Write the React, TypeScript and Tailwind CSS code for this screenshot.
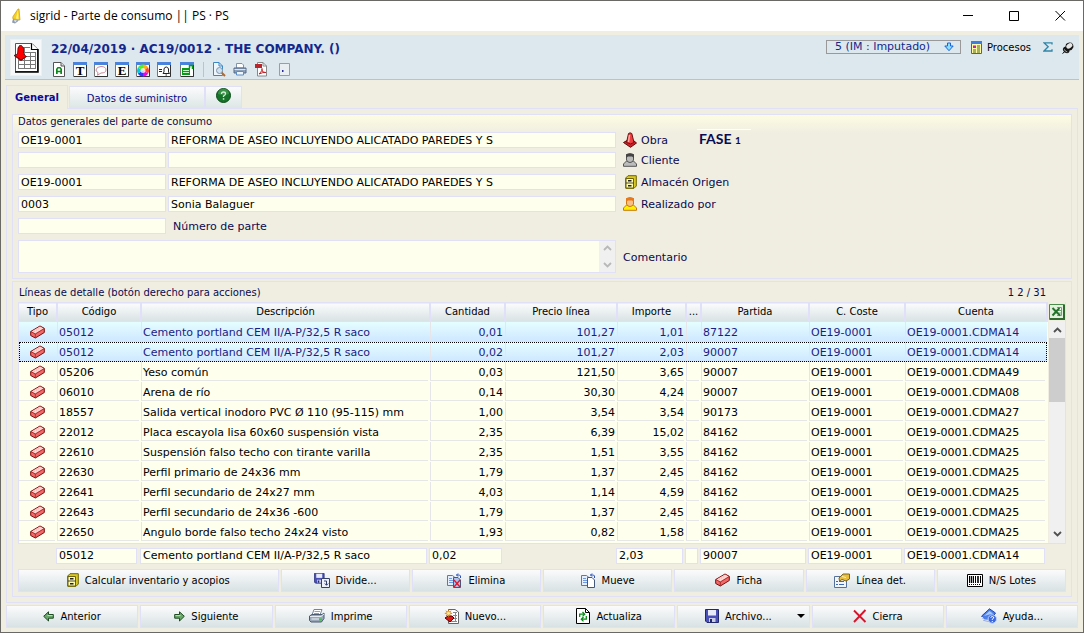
import React from "react";

type IconProps = { className?: string };

const Px = ({ w, h, className = "", children }: { w: number; h: number; className?: string; children: React.ReactNode }) => (
  <svg width={w} height={h} viewBox={`0 0 ${w} ${h}`} className={`shrink-0 ${className}`} aria-hidden="true">
    {children}
  </svg>
);

const AppIcon = () => (
  <Px w={14} h={16}>
    <path d="M8 1 L9 1 L10 12 L3 11 Q2 9 4 7 Z" fill="#f5d020" stroke="#c99a10" strokeWidth=".7" />
    <path d="M8 1.500 L8.500 11 L6 10.500 Z" fill="#fff08a" />
    <path d="M3 11 L9 12.500 L5 15.500 L2 14.500 Z" fill="#8d9bab" />
    <path d="M4 12 L7 12.500 L5 14.500 Z" fill="#e3e9f0" />
  </Px>
);

const SheetIcon = () => (
  <Px w={26} h={32}>
    <path d="M2.500 1.500 H19 L24.500 7 V29.500 H2.500 Z" fill="#fff" stroke="#555" />
    <path d="M25 7 V30 H2" fill="none" stroke="#000" strokeWidth="1.500" />
    <path d="M18.500 1.500 V7.500 H25" fill="#fff" stroke="#000" strokeWidth="1.200" />
    <path d="M5.500 5.500 H17 M5.500 10.500 H22.500 M5.500 14.500 H22.500 M5.500 18.500 H22.500 M5.500 22.500 H22.500 M5.500 26.500 H22.500 M5.500 5 V27 M11.500 5 V27 M17.500 10 V27 M22.500 10 V27" stroke="#777" fill="none" />
    <path d="M6.500 3.500 H8.500 L10.500 6 V11.500 L12 13.500 L13.500 14.500 L8 18.500 L1 13.500 L4.500 12 L5 6 Z" fill="#f00" stroke="#300" strokeWidth=".7" />
    <path d="M1.500 13.500 L8 18 L13 14.500" fill="none" stroke="#8b0000" />
  </Px>
);

const WindowFrame = () => (
  <>
    <path d="M.5 .5 H13.500 V14.500 H.5 Z" fill="#fff" stroke="#777" />
    <path d="M13.500 2 V14.500 H1" fill="none" stroke="#333" />
    <path d="M0 0 H14 V3 H0 Z" fill="#4a83dc" />
  </>
);

const LetterAIcon = () => (
  <Px w={14} h={15}>
    <path d="M1.500 .5 H9 L12.500 4 V14.500 H1.500 Z" fill="#fff" stroke="#555" />
    <path d="M9 .5 V4 H12.500" fill="#ddd" stroke="#555" />
    <path d="M4 12 V7 L5.500 5 H8.500 L10 7 V12 H8.300 V10.300 H5.700 V12 Z M5.700 7.200 V8.800 H8.300 V7.200 L7.800 6.600 H6.200 Z" fill="#0a8a1a" fillRule="evenodd" />
  </Px>
);
const LetterIcon = ({ letter }: { letter: string }) => (
  <Px w={14} h={15}>
    <WindowFrame />
    <text x="7" y="13" textAnchor="middle" fontSize="13" fontWeight="700" fontFamily="Liberation Serif, serif">{letter}</text>
  </Px>
);
const BubbleIcon = () => (
  <Px w={14} h={15}>
    <WindowFrame />
    <path d="M7 4.500 Q12 4.500 12 8 Q12 11 7 11 L3.500 13.200 L4 10.500 Q2 9.500 2 8 Q2.500 4.500 7 4.500" fill="#fff" stroke="#c98a9a" />
  </Px>
);
const ColorIcon = () => (
  <Px w={14} h={15}>
    <WindowFrame />
    <path d="M7 8.500 L7 2.500 A6 6 0 0 1 12.200 5.500 Z" fill="#ffb000" />
    <path d="M7 8.500 L12.200 5.500 A6 6 0 0 1 12.200 11.500 Z" fill="#f43" />
    <path d="M7 8.500 L12.200 11.500 A6 6 0 0 1 7 14.500 Z" fill="#e0e" />
    <path d="M7 8.500 L7 14.500 A6 6 0 0 1 1.800 11.500 Z" fill="#33f" />
    <path d="M7 8.500 L1.800 11.500 A6 6 0 0 1 1.800 5.500 Z" fill="#0cd" />
    <path d="M7 8.500 L1.800 5.500 A6 6 0 0 1 7 2.500 Z" fill="#5e2" />
    <circle cx="7" cy="8.500" r="2.500" fill="#fff" opacity=".75" />
  </Px>
);
const BellIcon = () => (
  <Px w={14} h={15}>
    <WindowFrame />
    <path d="M2 7.500 H5 M2 9.500 H5" stroke="#222" />
    <path d="M6 11.500 H12.500 L11.500 10 V7 Q11 5 9.300 5 Q7.500 5 7 7 V10 Z M8.500 13 H10" fill="#fff" stroke="#222" />
  </Px>
);
const GreenSheetIcon = () => (
  <Px w={15} h={15}>
    <WindowFrame />
    <path d="M2 6 H10 V13 H2 Z" fill="#0a9a1a" />
    <path d="M3 8.500 H9 M3 10.500 H9" stroke="#bff5c0" />
    <path d="M9.500 6 V3.500 H12.500 V7" fill="none" stroke="#0a9a1a" strokeWidth="1.500" />
  </Px>
);
const PreviewIcon = () => (
  <Px w={14} h={15}>
    <path d="M1.500 .5 H7 L10.500 4 V13.500 H1.500 Z" fill="#eef6fd" stroke="#3c86c4" />
    <path d="M7 .5 V4 H10.500" fill="none" stroke="#3c86c4" />
    <path d="M9.500 10.500 L13 14" stroke="#b06a2c" strokeWidth="2" />
    <circle cx="7.500" cy="8.500" r="3" fill="#cfe2f2" stroke="#8295aa" />
  </Px>
);
const SmallPrinterIcon = () => (
  <Px w={14} h={14}>
    <path d="M3.500 1.500 H9 L10.500 3 V6 H3.500 Z" fill="#fff" stroke="#8093ab" />
    <path d="M1 6 H13 V11 H1 Z" fill="#8ea1ba" stroke="#566a88" />
    <path d="M1.500 7.500 H12.500" stroke="#dbe5f2" />
    <path d="M3.500 9.500 H10.500 V13 H3.500 Z" fill="#eef5fc" stroke="#5c8cc0" />
  </Px>
);
const PdfIcon = () => (
  <Px w={14} h={15}>
    <path d="M3.500 .5 H9 L12.500 4 V14 H3.500 Z" fill="#fff" stroke="#888" />
    <path d="M9 .5 V4 H12.500" fill="none" stroke="#888" />
    <path d="M1 2 H8 V6 H1 Z" fill="#b8262c" />
    <path d="M5 12 Q9 8 8 6.500 Q7 7 9 10 L12 10.500 Q9 10 5 12" fill="none" stroke="#c02026" />
  </Px>
);
const DotIcon = () => (
  <Px w={12} h={13}>
    <path d="M.5 .5 H10.500 V12.500 H.5 Z" fill="#e8eef2" stroke="#8fa0ae" />
    <path d="M3 7 h1.500 v2 h-1.500 Z" fill="#2a2aa0" />
  </Px>
);
const BlueDownIcon = ({ className }: IconProps) => (
  <Px w={10} h={10} className={className}>
    <path d="M3.500 1 H6.500 V4 H9.200 L5 8.700 L.8 4 H3.500 Z" fill="#8ce0ff" stroke="#1a62d8" />
  </Px>
);
const ProcessIcon = () => (
  <Px w={11} h={13}>
    <path d="M.5 .5 H10.500 V12.500 H.5 Z" fill="#fff9a8" stroke="#2c66c8" />
    <path d="M0 0 H11 V3 H0 Z" fill="#3c7de0" />
    <path d="M2 4.500 H5 V7 H2 Z" fill="#c020c0" />
    <path d="M6 5 H9 M6 7 H9 M2 9 H5 M6 9 H9 M2 11 H5 M6 11 H9" stroke="#4a6a10" />
  </Px>
);
const SigmaIcon = () => (
  <Px w={10} h={10}>
    <path d="M9 2.500 V.8 H1 L5.200 4.800 L1 9 H9 V7.200" fill="none" stroke="#2f86a8" strokeWidth="1.300" />
  </Px>
);
const PinIcon = () => (
  <Px w={12} h={12}>
    <path d="M.5 11.500 L3.500 9" stroke="#000" />
    <path d="M4 2 Q6.500 -.3 9.500 .8 Q12 2.500 11.300 5.500 Q10 8.500 7.500 8.500 Q7.500 11.200 5 11.300 Q1 10.500 .8 7 Q1.500 4.500 3.500 4.500 Z" fill="#151515" />
    <ellipse cx="7.300" cy="3.800" rx="3.300" ry="2.300" fill="#e6e6e6" transform="rotate(-35 7.300 3.800)" />
    <path d="M2.300 7.300 Q3 9.500 5.300 10" fill="none" stroke="#aaa" />
  </Px>
);
const HelpBall = () => (
  <Px w={15} h={15}>
    <circle cx="7.500" cy="7.500" r="7" fill="#17722a" stroke="#0b4a18" />
    <path d="M2 6 A5.500 5.500 0 0 1 13 6 Q7.500 8 2 6" fill="#4fa65c" opacity=".6" />
    <path d="M5.500 6 Q5.500 4 7.500 4 Q9.500 4 9.500 5.700 Q9.500 7 7.500 8 V9" fill="none" stroke="#d6eed6" strokeWidth="1.300" />
    <path d="M6.800 10.200 h1.500 v1.500 h-1.500 Z" fill="#d6eed6" />
  </Px>
);
const ConeIcon = () => (
  <Px w={14} h={16}>
    <path d="M.5 10.500 L4 8.500 L10.500 8.500 L13.500 11 L7.500 15.300 Z" fill="#d02028" stroke="#5a0a0a" />
    <path d="M5.500 1.500 Q7 .2 8.800 1.500 L11 10.500 Q8 13.500 3.500 10.500 Z" fill="#ee3c40" stroke="#701010" />
    <path d="M6.500 3 L5.500 10" stroke="#ffb0a8" strokeWidth="1.500" />
  </Px>
);
const PersonIcon = ({ hair, face, body, line }: { hair: string; face: string; body: string; line: string }) => (
  <Px w={14} h={14}>
    <path d="M.5 13.300 V11 L3.500 8 H10.500 L13.500 11 V13.300 Z" fill={body} stroke={line} />
    <path d="M3.500 1.500 Q7 -.2 10.500 1.500 V7 Q9.500 9.500 7 9.500 Q4.500 9.500 3.500 7 Z" fill={face} stroke={line} />
    <path d="M3 5 V1.500 Q7 -.5 11 1.500 V5 L9 3.500 H5 Z" fill={hair} />
  </Px>
);
const CabinetIcon = () => (
  <Px w={12} h={14}>
    <path d="M.7 3 L3 .7 H11.300 V11 L9 13.300 H.7 Z" fill="#d8c828" stroke="#6f6400" />
    <path d="M1 3.500 H8.500 V13 H1 Z" fill="#fffbb0" stroke="#6f6400" />
    <path d="M1 8 H8.500" stroke="#222" strokeWidth=".8" />
    <path d="M3 5 H6.500 V6.500 H3 Z M3 10 H6.500 V11.500 H3 Z" fill="#222" />
  </Px>
);
const BrickIcon = () => (
  <Px w={15} h={14}>
    <path d="M.7 6.500 L10 1 L14.300 3.300 V7.500 L5.300 13 L.7 10.500 Z" fill="#f06a6a" stroke="#7a0c0c" />
    <path d="M1.500 6.500 L10 1.600 L13.500 3.500 L5.300 8.600 Z" fill="#ffd6d2" />
    <path d="M.9 6.600 L5.300 9 L14 3.700 M5.300 9 V12.800" fill="none" stroke="#a02020" strokeWidth=".8" />
    <path d="M4 6.500 L10.500 2.800" stroke="#f5a5a0" strokeDasharray="1 1.500" />
  </Px>
);
const ExcelIcon = () => (
  <Px w={16} h={16}>
    <path d="M.5 .5 H15.500 V15.500 H.5 Z" fill="#e3f0de" stroke="#4a8a4a" />
    <path d="M15 1 V15 H1" fill="none" stroke="#2f6a2f" strokeWidth="2" />
    <path d="M8 3.500 H12.500 V11.500 H8 M8 6.500 H12 M8 9 H12" fill="#fff" stroke="#6ea66e" />
    <path d="M3.500 4 L11 11.500 M10.500 4 L3.500 11.500" stroke="#23742a" strokeWidth="2" />
  </Px>
);
const ChevronIcon = ({ up, color }: { up?: boolean; color: string }) => (
  <Px w={9} h={6}>
    <path d={up ? "M1 5 L4.500 1.500 L8 5" : "M1 1 L4.500 4.500 L8 1"} fill="none" stroke={color} strokeWidth="1.800" />
  </Px>
);
const Floppy = () => (
  <>
    <path d="M.5 .5 H13.500 V13.500 H2 L.5 12 Z" fill="#4a50b8" stroke="#22286e" />
    <path d="M3 1 H11 V6.500 H3 Z" fill="#e8ecfa" />
    <path d="M4 9 H10.500 V13 H4 Z" fill="#c9cde6" />
    <path d="M5 10 H7 V13 H5 Z" fill="#22286e" />
  </>
);
const SaveIcon = () => <Px w={14} h={14}><Floppy /></Px>;
const DivideIcon = () => (
  <Px w={16} h={15}>
    <g transform="scale(.75)"><Floppy /></g>
    <path d="M7.500 5.500 H15.500 V14.500 H7.500 Z" fill="#eef1fa" stroke="#34406a" />
    <path d="M10 8 H12.500 V12 M10.800 10.500 L12.500 12.300 L14.200 10.500" fill="none" stroke="#34406a" />
  </Px>
);
const PagesIcon = ({ cross }: { cross?: boolean }) => (
  <Px w={15} h={15}>
    <path d="M.5 2.500 H5.500 L8.500 5 V12.500 H.5 Z" fill="#e6eefb" stroke="#5c78a8" />
    <path d="M2 5.500 H5 M2 7.500 H6 M2 9.500 H6" stroke="#6f9ae0" />
    <path d="M6.500 4.500 H11 L13.500 7 V14.500 H6.500 Z" fill={cross ? "#a9c4f2" : "#fff"} stroke="#44587c" />
    <path d="M9.500 2 H12.500 L13.500 3 V5 M11 .5 L9.500 2 L11 3.500" fill="none" stroke="#2850b8" />
    {cross && <path d="M7 7 L13 14 M13 7 L7 14" stroke="#e0182c" strokeWidth="1.300" />}
  </Px>
);
const PropertiesIcon = () => (
  <Px w={16} h={15}>
    <path d="M.5 3.500 H12.500 V14.500 H.5 Z" fill="#f2f6fc" stroke="#56709c" />
    <path d="M2 8.500 H4 M5 8.500 H10 M2 11.500 H4 M5 11.500 H10" stroke="#3c68b8" />
    <path d="M5 5 L9 1 H15.500 V6 L12 8 L8 6.500 L5.500 8 Z" fill="#e8bc3c" stroke="#7a6420" />
    <path d="M8 3.500 L12 4.500" stroke="#fff0a8" />
  </Px>
);
const BarcodeIcon = () => (
  <Px w={16} h={13}>
    <path d="M.5 .5 H15.500 V12.500 H.5 Z" fill="#fff" stroke="#000" />
    <path d="M2.500 2 V9 M6.500 2 V9 M8.500 2 V9 M13.500 2 V9" stroke="#000" />
    <path d="M4.500 2 V9 M11 2 V9" stroke="#000" strokeWidth="1.600" />
    <path d="M2 10.500 H14" stroke="#000" strokeDasharray="1 1" />
  </Px>
);
const ArrowIcon = ({ right }: { right?: boolean }) => (
  <Px w={11} h={11}>
    <path
      d={right ? "M10.300 5.300 L5.500 .8 V3.500 H.7 V7.200 H5.500 V10 Z" : "M.7 5.300 L5.500 .8 V3.500 H10.300 V7.200 H5.500 V10 Z"}
      fill="#6aa86a"
      stroke="#1f4a24"
    />
    <path d={right ? "M1.500 4.500 H6.500" : "M4.500 4.500 H9.500"} stroke="#b4e0ac" />
  </Px>
);
const PrinterIcon = () => (
  <Px w={16} h={14}>
    <path d="M5 .5 H13 L11 6 H3 Z" fill="#fff" stroke="#74839a" />
    <path d="M5.500 2.500 H11 M5 4.500 H10" stroke="#7fa4d8" />
    <path d="M.5 7 L3 5.500 H13 L15 4 V9.500 L12.500 13 H2 L.5 11.500 Z" fill="#9aa7b8" stroke="#4c5a70" />
    <path d="M1 7.500 H12 L15 5" fill="none" stroke="#e8edf4" />
    <path d="M2.500 10 H10" stroke="#f2f5f9" />
    <path d="M10 9.500 h3 v2 h-3 Z" fill="#2ad42a" />
  </Px>
);
const NewIcon = () => (
  <Px w={15} h={15}>
    <path d="M4.500 .5 H11 L14.500 3 V14.500 H4.500 Z" fill="#fff" stroke="#666" />
    <path d="M9 3.500 H13 M9 6.500 H13 M9 9.500 H13 M6 12.500 H13 M11.500 3 V13" stroke="#888" />
    <path d="M1 9 L4 7 H8 L10 9 L6 13 Z" fill="#e01818" stroke="#500" />
    <path d="M4.500 .5 V8 M.8 4.300 H8.200 M2 1.700 L7 7 M7 1.700 L2 7" stroke="#c06a10" strokeWidth=".9" />
    <circle cx="4.500" cy="4.300" r="2" fill="#ffe88a" stroke="#e09020" strokeWidth=".7" />
  </Px>
);
const RefreshIcon = () => (
  <Px w={14} h={16}>
    <path d="M.5 .5 H9.500 L13.500 4.500 V15.500 H.5 Z" fill="#fff" stroke="#000" />
    <path d="M9.500 .5 V4.500 H13.500" fill="none" stroke="#000" />
    <path d="M3.700 9 V6.200 H7.500 M6.500 4 L8.700 6.200 L6.500 8.400" fill="none" stroke="#0a8a1a" strokeWidth="1.300" />
    <path d="M10.300 8 V11.200 H6.500 M7.500 9 L5.300 11.200 L7.500 13.400" fill="none" stroke="#0a8a1a" strokeWidth="1.300" />
  </Px>
);
const CrossIcon = () => (
  <Px w={14} h={14}>
    <path d="M1 1.500 L12.500 13 M12.500 1 L1 13" stroke="#d8142c" strokeWidth="1.900" />
  </Px>
);
const HelpBookIcon = () => (
  <Px w={16} h={16}>
    <path d="M.7 8 L8.500 .8 L14.500 5 L9 13 L3 12.500 Z" fill="#4c80e8" stroke="#2448b0" />
    <path d="M3 8 L8.500 3 L12 5.500 Z" fill="#a8c8ff" />
    <path d="M1 9 L3 12 L9 12.500" fill="none" stroke="#fff" />
    <circle cx="11.300" cy="11" r="4.200" fill="#3c68dc" stroke="#bcd0ff" />
    <path d="M9.800 9.800 Q10 8.500 11.400 8.500 Q13 8.700 12.700 10 Q12.300 10.700 11.300 11.200 V12 M11.300 13 V14" fill="none" stroke="#fff" />
  </Px>
);

const fieldCls = "min-w-0 border border-[#e0e0f8] bg-[#ffffee] px-[2px] text-[11px] leading-[14px] text-black outline-none";
const btnCls =
  "flex h-[23px] items-center justify-center gap-[6px] border border-[#e0e0f8] bg-linear-to-b from-[#fbfbfc] to-[#d8e2e4] text-[10px] text-black";

const Field = ({ label, value = "", className = "" }: { label: string; value?: string; className?: string }) => (
  <input aria-label={label} defaultValue={value} className={`h-[16px] ${fieldCls} ${className}`} />
);

const ToolButton = ({ label, children }: { label: string; children: React.ReactNode }) => (
  <button type="button" aria-label={label} className="flex h-[16px] items-center">
    {children}
  </button>
);

const IconLabel = ({ icon, text, className = "" }: { icon: React.ReactNode; text: string; className?: string }) => (
  <div className={`ml-[5px] flex h-[16px] items-center gap-[4px] leading-[16px] ${className}`}>
    {icon}
    <span className="pt-[2px]">{text}</span>
  </div>
);

const ActionButton = ({ icon, text, className = "" }: { icon: React.ReactNode; text: string; className?: string }) => (
  <button type="button" className={`${btnCls} ${className}`}>
    {icon}
    <span>{text}</span>
  </button>
);

type Row = [string, string, string, string, string, string, string];
const rows: Row[] = [
  ["05012", "Cemento portland CEM II/A-P/32,5 R saco", "0,01", "101,27", "1,01", "87122", "14"],
  ["05012", "Cemento portland CEM II/A-P/32,5 R saco", "0,02", "101,27", "2,03", "90007", "14"],
  ["05206", "Yeso común", "0,03", "121,50", "3,65", "90007", "49"],
  ["06010", "Arena de río", "0,14", "30,30", "4,24", "90007", "08"],
  ["18557", "Salida vertical inodoro PVC Ø 110 (95-115) mm", "1,00", "3,54", "3,54", "90173", "27"],
  ["22012", "Placa escayola lisa 60x60 suspensión vista", "2,35", "6,39", "15,02", "84162", "25"],
  ["22610", "Suspensión falso techo con tirante varilla", "2,35", "1,51", "3,55", "84162", "25"],
  ["22630", "Perfil primario de 24x36 mm", "1,79", "1,37", "2,45", "84162", "25"],
  ["22641", "Perfil secundario de 24x27 mm", "4,03", "1,14", "4,59", "84162", "25"],
  ["22643", "Perfil secundario de 24x36 -600", "1,79", "1,37", "2,45", "84162", "25"],
  ["22650", "Angulo borde falso techo 24x24 visto", "1,93", "0,82", "1,58", "84162", "25"],
];

const columns = [
  { name: "Tipo", width: "w-[38px]" },
  { name: "Código", width: "w-[84px]" },
  { name: "Descripción", width: "w-auto" },
  { name: "Cantidad", width: "w-[75px]" },
  { name: "Precio línea", width: "w-[112px]" },
  { name: "Importe", width: "w-[69px]" },
  { name: "...", width: "w-[15px]" },
  { name: "Partida", width: "w-[108px]" },
  { name: "C. Coste", width: "w-[96px]" },
  { name: "Cuenta", width: "w-[142px]" },
];

const DetailTable = () => (
  <table className="w-full table-fixed border-collapse text-[11px]">
    <colgroup>
      {columns.map((c) => (
        <col key={c.name} className={c.width} />
      ))}
    </colgroup>
    <thead>
      <tr>
        {columns.map((c) => (
          <th
            key={c.name}
            className="h-[19px] overflow-hidden border-y border-r-2 border-[#e0e0f8] bg-linear-to-b from-[#fbfbfc] to-[#d8e2e4] p-0 text-center text-[10px] leading-[16px] font-normal whitespace-nowrap text-black"
          >
            {c.name}
          </th>
        ))}
      </tr>
    </thead>
    <tbody>
      {rows.map((r, i) => {
        const selected = i < 2;
        const cells: React.ReactNode[] = [
          <BrickIcon key="icon" />, r[0], r[1], r[2], r[3], r[4], "", r[5], "OE19-0001", `OE19-0001.CDMA${r[6]}`,
        ];
        return (
          <tr
            key={i}
            aria-selected={selected}
            className={
              selected
                ? `bg-linear-to-b from-[#e4feff] to-[#cfe6ff] text-[#1c1c84] ${i === 1 ? "outline-1 -outline-offset-1 outline-black outline-dotted" : ""}`
                : "bg-[#ffffee] text-black"
            }
          >
            {cells.map((c, k) => (
              <td key={k} className="h-[20px] p-0">
                <div
                  className={`mr-[2px] flex h-[19px] items-center overflow-hidden border-b leading-[16px] whitespace-nowrap ${
                    selected ? "border-b-transparent" : "border-b-[#e6e6e6]"
                  } ${k === 0 ? "justify-center pt-[2px]" : "border-l border-l-[#e6e6ea] pt-[4px] pl-[1px]"} ${k >= 3 && k <= 5 ? "justify-end" : ""}`}
                >
                  {c}
                </div>
              </td>
            ))}
          </tr>
        );
      })}
    </tbody>
  </table>
);

const Scrollbar = () => (
  <div className="flex w-[16px] grow flex-col items-center bg-[#f0f0f0] pt-[6px] pb-[6px]">
    <ChevronIcon up color="#505050" />
    <div className="mt-[5px] h-[64px] w-full bg-[#cdcdcd]" />
    <div className="mt-auto">
      <ChevronIcon color="#505050" />
    </div>
  </div>
);

export default function App() {
  return (
    <div className="flex min-h-screen flex-col border border-[#6b6966] bg-[#f0eee1] font-['DejaVu_Sans',Verdana,sans-serif] text-[11px] text-[#0a0a50]">
      <header className="flex h-[30px] items-center bg-white pl-[9px] text-black">
        <AppIcon />
        <h1 className="ml-[6px] font-['Open_Sans','Noto_Sans',sans-serif] text-[12px] leading-[16px]">
          sigrid - Parte de consumo || PS · PS
        </h1>
        <div className="ml-auto flex">
          <button type="button" aria-label="Minimizar" className="flex h-[30px] w-[46px] items-center justify-center">
            <Px w={11} h={11}><path d="M0 4.500 H10" stroke="#000" /></Px>
          </button>
          <button type="button" aria-label="Maximizar" className="flex h-[30px] w-[46px] items-center justify-center">
            <Px w={11} h={11}><path d="M.5 .5 H9.500 V9.500 H.5 Z" fill="none" stroke="#000" /></Px>
          </button>
          <button type="button" aria-label="Cerrar" className="flex h-[30px] w-[46px] items-center justify-center">
            <Px w={11} h={11}><path d="M.5 0 L10 9.500 M10 0 L.5 9.500" stroke="#000" /></Px>
          </button>
        </div>
      </header>

      <section className="mx-[4px] mt-[4px] flex h-[45px] items-start border-b border-[#b4c2e0] bg-[#dde7ee]">
        <div className="mt-[4px] ml-[5px] flex h-[37px] w-[32px] items-center justify-center border border-[#eef0f0] bg-[#f6f8fa]">
          <SheetIcon />
        </div>
        <div className="ml-[9px]">
          <h2 className="mt-[6px] text-[12px] leading-[16px] font-bold text-[#14288c]">22/04/2019 · AC19/0012 · THE COMPANY. ()</h2>
          <div className="mt-[4px] ml-px flex items-center gap-[7px]">
            <ToolButton label="Texto A"><LetterAIcon /></ToolButton>
            <ToolButton label="Texto T"><LetterIcon letter="T" /></ToolButton>
            <ToolButton label="Comentario"><BubbleIcon /></ToolButton>
            <ToolButton label="Texto E"><LetterIcon letter="E" /></ToolButton>
            <ToolButton label="Color"><ColorIcon /></ToolButton>
            <ToolButton label="Avisos"><BellIcon /></ToolButton>
            <div className="ml-[2px] flex"><ToolButton label="Hoja"><GreenSheetIcon /></ToolButton></div>
            <div className="mr-[1px] ml-[1px] h-[15px] w-px bg-[#b4c4d4]" />
            <ToolButton label="Vista previa"><PreviewIcon /></ToolButton>
            <ToolButton label="Imprimir"><SmallPrinterIcon /></ToolButton>
            <ToolButton label="PDF"><PdfIcon /></ToolButton>
            <div className="ml-[4px] flex"><ToolButton label="Más"><DotIcon /></ToolButton></div>
          </div>
        </div>
        <div className="mt-[5px] mr-[5px] ml-auto flex items-start">
          <div className="relative">
            <select
              aria-label="Estado"
              className="block h-[14px] w-[135px] appearance-none border border-[#999] bg-transparent pl-[8px] text-[11px] leading-[12px] text-[#14288c]"
            >
              <option>5 (IM : Imputado)</option>
            </select>
            <BlueDownIcon className="pointer-events-none absolute top-[2px] right-[7px]" />
          </div>
          <button type="button" className="ml-[10px] flex h-[15px] items-center gap-[5px] text-[10px] text-black">
            <ProcessIcon />
            <span>Procesos</span>
          </button>
          <button type="button" aria-label="Suma" className="ml-[12px] flex h-[13px] items-center"><SigmaIcon /></button>
          <button type="button" aria-label="Fijar" className="ml-[9px] flex h-[15px] items-center"><PinIcon /></button>
        </div>
      </section>

      <main className="mx-[5px] mt-[5px]">
        <div role="tablist" className="flex items-end">
          <button
            type="button"
            role="tab"
            aria-selected="true"
            className="h-[24px] w-[62px] border-t border-l border-r border-[#e0e0f8] pb-[1px] text-[10px] font-bold text-[#0a0aa0]"
          >
            General
          </button>
          <div className="flex grow items-end border-b border-[#e0e0f8]">
            <button
              type="button"
              role="tab"
              aria-selected="false"
              className="ml-px h-[22px] w-[137px] border-t border-r-2 border-l border-[#e0e0f8] bg-linear-to-b from-[#fbfbfc] to-[#dde6e6] pt-[2px] text-[10px] text-[#0a0a80]"
            >
              Datos de suministro
            </button>
            <button
              type="button"
              role="tab"
              aria-selected="false"
              aria-label="Ayuda"
              className="flex h-[22px] w-[36px] justify-center border-t border-r border-[#e0e0f8] bg-linear-to-b from-[#fbfbfc] to-[#dde6e6] pt-[1px]"
            >
              <HelpBall />
            </button>
          </div>
        </div>

        <div className="border-x border-b border-[#e0e0f8] px-[5px] pt-[5px] pb-[5px]">
          <fieldset className="h-[165px] min-w-0 border border-[#e0e0f8] bg-linear-to-b from-[#fdfce2] to-[#f0eee1] to-[18px] pl-[5px]">
            <h3 className="h-[17px] text-[10px] leading-[13px] text-[#0a0a50]">Datos generales del parte de consumo</h3>
            <div className="flex h-[20px] items-start gap-[2px]">
              <Field label="Código de obra" value="OE19-0001" className="w-[148px]" />
              <Field label="Obra" value="REFORMA DE ASEO INCLUYENDO ALICATADO PAREDES Y S" className="w-[448px]" />
              <IconLabel icon={<ConeIcon />} text="Obra" className="w-[72px]" />
              <div className="-mt-[3px] w-[54px] border-t border-white pl-[2px] font-['Lato',sans-serif] text-[14px] leading-[18px] font-bold">
                FASE <span className="text-[10px]">1</span>
              </div>
            </div>
            <div className="flex h-[22px] items-start gap-[2px]">
              <Field label="Código de cliente" className="w-[148px]" />
              <Field label="Cliente" className="w-[448px]" />
              <IconLabel icon={<PersonIcon hair="#444" face="#bbb" body="#bcbcbc" line="#555" />} text="Cliente" />
            </div>
            <div className="flex h-[22px] items-start gap-[2px]">
              <Field label="Código de almacén" value="OE19-0001" className="w-[148px]" />
              <Field label="Almacén Origen" value="REFORMA DE ASEO INCLUYENDO ALICATADO PAREDES Y S" className="w-[448px]" />
              <IconLabel icon={<CabinetIcon />} text="Almacén Origen" className="pl-[2px]" />
            </div>
            <div className="flex h-[22px] items-start gap-[2px]">
              <Field label="Código de persona" value="0003" className="w-[148px]" />
              <Field label="Realizado por" value="Sonia Balaguer" className="w-[448px]" />
              <IconLabel icon={<PersonIcon hair="#e8781c" face="#f8c088" body="#fff000" line="#c87810" />} text="Realizado por" />
            </div>
            <div className="flex h-[22px] items-start">
              <input id="numero" className={`h-[16px] w-[148px] ${fieldCls}`} />
              <label htmlFor="numero" className="ml-[7px] pt-[1px] leading-[16px]">Número de parte</label>
            </div>
            <div className="flex items-center">
              <div className="flex h-[33px] w-[598px] border border-[#e0e0f8] bg-[#ffffee]">
                <textarea id="comentario" className="h-full min-w-0 grow resize-none overflow-hidden bg-transparent outline-none" />
                <div className="flex w-[16px] flex-col items-center justify-between bg-[#f0f0f0] py-[4px]">
                  <ChevronIcon up color="#b8b8b8" />
                  <ChevronIcon color="#b8b8b8" />
                </div>
              </div>
              <label htmlFor="comentario" className="ml-[7px] pt-[2px] leading-[16px]">Comentario</label>
            </div>
          </fieldset>

          <fieldset className="mt-[2px] min-w-0 border border-[#e0e0f8] px-[5px] pb-[4px]">
            <div className="flex h-[20px] justify-between pt-[4px] pr-[20px] pl-px text-[10px] leading-[14px]">
              <h3>Líneas de detalle (botón derecho para acciones)</h3>
              <span>1 2 / 31</span>
            </div>
            <div className="flex border-b border-l border-[#e0e0f8] bg-[#ffffee]">
              <div className="min-w-0 grow pb-[1px]">
                <DetailTable />
              </div>
              <div className="flex w-[18px] shrink-0 flex-col border-r border-[#e0e0f8] bg-[#f0eee1] pl-[1px]">
                <button type="button" aria-label="Exportar a Excel" className="h-[19px]"><ExcelIcon /></button>
                <Scrollbar />
              </div>
            </div>

            <div className="mt-[4px] grid grid-cols-[38px_84px_1fr_75px_112px_69px_15px_108px_96px_162px]">
              <span />
              <Field label="Código" value="05012" className="mr-[3px]" />
              <Field label="Descripción" value="Cemento portland CEM II/A-P/32,5 R saco" className="mr-[2px]" />
              <Field label="Cantidad" value="0,02" className="mr-[2px]" />
              <span />
              <Field label="Importe" value="2,03" className="mr-[2px]" />
              <Field label="Marca" className="mr-[2px]" />
              <Field label="Partida" value="90007" className="mr-[2px]" />
              <Field label="C. Coste" value="OE19-0001" className="mr-[2px]" />
              <Field label="Cuenta" value="OE19-0001.CDMA14" className="mr-[21px]" />
            </div>

            <div className="mt-[5px] grid grid-cols-8 gap-[2px]">
              <ActionButton icon={<CabinetIcon />} text="Calcular inventario y acopios" className="col-span-2" />
              <ActionButton icon={<DivideIcon />} text="Divide..." />
              <ActionButton icon={<PagesIcon cross />} text="Elimina" />
              <ActionButton icon={<PagesIcon />} text="Mueve" />
              <ActionButton icon={<BrickIcon />} text="Ficha" />
              <ActionButton icon={<PropertiesIcon />} text="Línea det." />
              <ActionButton icon={<BarcodeIcon />} text="N/S Lotes" />
            </div>
          </fieldset>
        </div>
      </main>

      <footer className="mx-[5px] mt-[2px] grid grid-cols-8 gap-[2px]">
        <ActionButton icon={<ArrowIcon />} text="Anterior" />
        <ActionButton icon={<ArrowIcon right />} text="Siguiente" />
        <ActionButton icon={<PrinterIcon />} text="Imprime" />
        <ActionButton icon={<NewIcon />} text="Nuevo..." />
        <ActionButton icon={<RefreshIcon />} text="Actualiza" />
        <button type="button" className={`${btnCls} relative`}>
          <SaveIcon />
          <span className="mr-[10px]">Archivo...</span>
          <Px w={8} h={4} className="absolute right-[4px]"><path d="M0 0 H8 L4 4 Z" fill="#000" /></Px>
        </button>
        <ActionButton icon={<CrossIcon />} text="Cierra" />
        <ActionButton icon={<HelpBookIcon />} text="Ayuda..." />
      </footer>
    </div>
  );
}
